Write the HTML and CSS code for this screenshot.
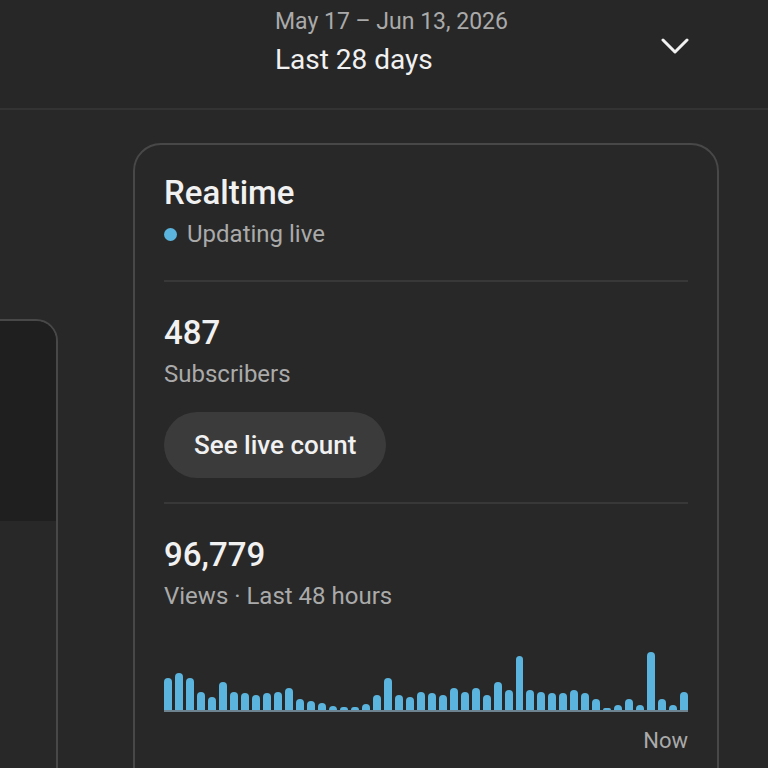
FILE: index.html
```html
<!DOCTYPE html>
<html lang="en">

<head>
  <meta charset="UTF-8">
  <meta name="viewport" content="width=device-width, initial-scale=1.0">
  <title>Channel analytics</title>
  <link rel="stylesheet" href="styles.css">
</head>

<body>
  <div class="range-bar">
    <div class="range-text">
      <div class="range-dates">May 17 – Jun 13, 2026</div>
      <div class="range-label">Last 28 days</div>
    </div>
    <svg class="chevron" width="28" height="18" viewBox="0 0 28 18">
      <polyline points="2,3 14,15 26,3" fill="none" stroke="#f1f1f1" stroke-width="3" stroke-linecap="round" stroke-linejoin="round" />
    </svg>
  </div>

  <div class="cards">
    <div class="card side-card">
      <div class="thumb"></div>
    </div>

    <div class="card realtime">
      <div class="card-title">Realtime</div>
      <div class="live"><span class="dot"></span>Updating live</div>

      <hr class="divider">

      <div class="big-number">487</div>
      <div class="sub-label">Subscribers</div>
      <button class="pill">See live count</button>

      <hr class="divider">

      <div class="big-number">96,779</div>
      <div class="sub-label">Views · Last 48 hours</div>

      <div class="chart">
        <div class="bar" style="height:32px"></div>
        <div class="bar" style="height:37px"></div>
        <div class="bar" style="height:32px"></div>
        <div class="bar" style="height:18px"></div>
        <div class="bar" style="height:13px"></div>
        <div class="bar" style="height:28px"></div>
        <div class="bar" style="height:18px"></div>
        <div class="bar" style="height:17px"></div>
        <div class="bar" style="height:15px"></div>
        <div class="bar" style="height:17px"></div>
        <div class="bar" style="height:18px"></div>
        <div class="bar" style="height:22px"></div>
        <div class="bar" style="height:11px"></div>
        <div class="bar" style="height:9px"></div>
        <div class="bar" style="height:7px"></div>
        <div class="bar" style="height:4px"></div>
        <div class="bar" style="height:3px"></div>
        <div class="bar" style="height:3px"></div>
        <div class="bar" style="height:6px"></div>
        <div class="bar" style="height:15px"></div>
        <div class="bar" style="height:32px"></div>
        <div class="bar" style="height:15px"></div>
        <div class="bar" style="height:13px"></div>
        <div class="bar" style="height:18px"></div>
        <div class="bar" style="height:17px"></div>
        <div class="bar" style="height:15px"></div>
        <div class="bar" style="height:22px"></div>
        <div class="bar" style="height:18px"></div>
        <div class="bar" style="height:22px"></div>
        <div class="bar" style="height:15px"></div>
        <div class="bar" style="height:28px"></div>
        <div class="bar" style="height:20px"></div>
        <div class="bar" style="height:54px"></div>
        <div class="bar" style="height:20px"></div>
        <div class="bar" style="height:18px"></div>
        <div class="bar" style="height:17px"></div>
        <div class="bar" style="height:17px"></div>
        <div class="bar" style="height:20px"></div>
        <div class="bar" style="height:17px"></div>
        <div class="bar" style="height:11px"></div>
        <div class="bar" style="height:2px"></div>
        <div class="bar" style="height:5px"></div>
        <div class="bar" style="height:11px"></div>
        <div class="bar" style="height:5px"></div>
        <div class="bar" style="height:58px"></div>
        <div class="bar" style="height:11px"></div>
        <div class="bar" style="height:5px"></div>
        <div class="bar" style="height:18px"></div>
      </div>
      <div class="chart-end">Now</div>
    </div>
  </div>
</body>

</html>
```

FILE: styles.css
```css
html,
body {
  margin: 0;
  height: 768px;
  overflow: hidden;
}

body {
  background-color: #282828;
  color: #f1f1f1;
  font-family: Roboto, "Noto Sans", sans-serif;
}

.range-bar {
  display: flex;
  justify-content: space-between;
  align-items: flex-start;
  height: 99px;
  padding: 9px 79px 0 275px;
  background: #272727;
  border-bottom: 2px solid #333333;
}

.range-dates {
  font-size: 23px;
  line-height: 26px;
  color: #aaaaaa;
}

.range-label {
  margin-top: 9px;
  font-size: 28px;
  line-height: 32px;
}

.chevron {
  margin-top: 28px;
}

.cards {
  display: flex;
  align-items: flex-start;
  gap: 75px;
  padding-top: 33px;
}

.card {
  border: 2px solid #484848;
  box-sizing: border-box;
}

.side-card {
  flex: none;
  width: 300px;
  height: 600px;
  margin-left: -242px;
  margin-top: 176px;
  border-radius: 22px;
  overflow: hidden;
}

.thumb {
  height: 200px;
  background: #1f1f1f;
}

.realtime {
  flex: none;
  width: 586px;
  padding: 30px 29px 80px;
  border-radius: 28px;
}

.card-title,
.big-number {
  font-size: 33px;
  line-height: 36px;
  font-weight: 500;
}

.live,
.sub-label {
  margin-top: 9px;
  font-size: 24px;
  line-height: 28px;
  color: #aaaaaa;
}

.live {
  display: flex;
  align-items: center;
}

.dot {
  width: 13px;
  height: 13px;
  margin-right: 10px;
  border-radius: 50%;
  background: #5bb4dd;
}

.divider {
  margin: 32px 0 33px;
  border: 0;
  border-top: 2px solid #383838;
}

.pill {
  display: block;
  height: 66px;
  margin: 24px 0 0;
  padding: 0 30px;
  border: 0;
  border-radius: 33px;
  background: #3b3b3b;
  color: #f1f1f1;
  font-family: inherit;
  font-size: 26px;
  font-weight: 500;
}

.pill + .divider {
  margin-top: 24px;
}

.chart {
  display: flex;
  align-items: flex-end;
  gap: 3px;
  height: 64px;
  margin-top: 36px;
  border-bottom: 2px solid #6d8490;
}

.bar {
  flex: 1;
  background: #5bb4dd;
  border-radius: 4px 4px 0 0;
}

.chart-end {
  margin-top: 16px;
  text-align: right;
  font-size: 22px;
  line-height: 26px;
  color: #aaaaaa;
}
```
